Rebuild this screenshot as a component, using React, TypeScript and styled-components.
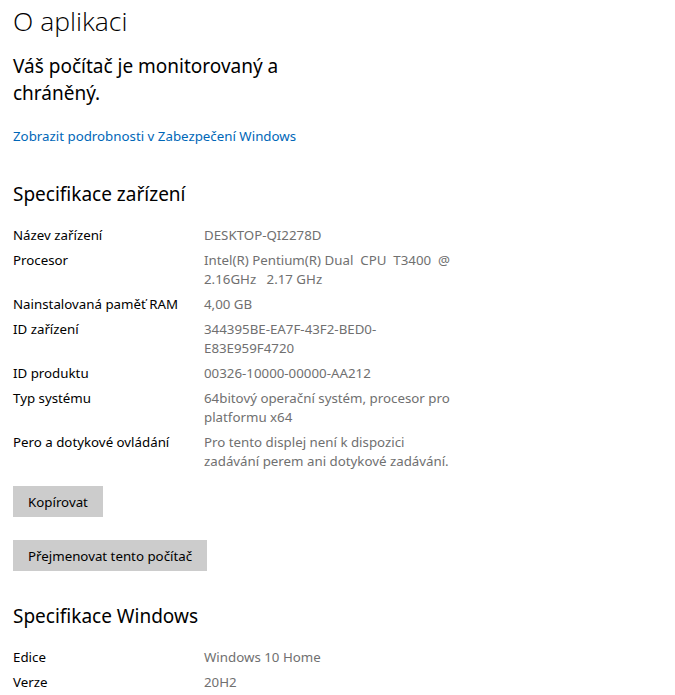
import styled, { createGlobalStyle } from 'styled-components';

type SpecRow = {
    label: string;
    lines: string[];
};

const deviceSpecs: SpecRow[] = [
    { label: 'Název zařízení', lines: ['DESKTOP-QI2278D'] },
    {
        label: 'Procesor',
        lines: ['Intel(R) Pentium(R) Dual  CPU  T3400  @', '2.16GHz   2.17 GHz'],
    },
    { label: 'Nainstalovaná paměť RAM', lines: ['4,00 GB'] },
    { label: 'ID zařízení', lines: ['344395BE-EA7F-43F2-BED0-', 'E83E959F4720'] },
    { label: 'ID produktu', lines: ['00326-10000-00000-AA212'] },
    {
        label: 'Typ systému',
        lines: ['64bitový operační systém, procesor pro', 'platformu x64'],
    },
    {
        label: 'Pero a dotykové ovládání',
        lines: [
            'Pro tento displej není k dispozici',
            'zadávání perem ani dotykové zadávání.',
        ],
    },
];

const windowsSpecs: SpecRow[] = [
    { label: 'Edice', lines: ['Windows 10 Home'] },
    { label: 'Verze', lines: ['20H2'] },
];

const SpecTable = ({ rows }: { rows: SpecRow[] }) => (
    <Table>
        {rows.map((row) => (
            <Row key={row.label}>
                <Label>{row.label}</Label>
                <Value>
                    {row.lines.map((line, index) => (
                        <ValueLine key={index}>{line}</ValueLine>
                    ))}
                </Value>
            </Row>
        ))}
    </Table>
);

const App = () => {
    return (
        <>
            <GlobalStyle />
            <Page>
                <PageTitle>O aplikaci</PageTitle>
                <Status>Váš počítač je monitorovaný a chráněný.</Status>
                <Link href="#">Zobrazit podrobnosti v Zabezpečení Windows</Link>

                <SectionTitle $top={35}>Specifikace zařízení</SectionTitle>
                <SpecTable rows={deviceSpecs} />

                <Actions>
                    <Button type="button">Kopírovat</Button>
                    <Button type="button">Přejmenovat tento počítač</Button>
                </Actions>

                <SectionTitle $top={32}>Specifikace Windows</SectionTitle>
                <SpecTable rows={windowsSpecs} />
            </Page>
        </>
    );
};

const GlobalStyle = createGlobalStyle`
    * {
        box-sizing: border-box;
    }

    body {
        margin: 0;
        background: #ffffff;
        font-family: 'Noto Sans', 'Open Sans', sans-serif;
        color: #000000;
    }
`;

const Page = styled.main`
    display: flex;
    flex-direction: column;
    align-items: flex-start;
    padding: 3px 0 20px 13px;
`;

const PageTitle = styled.h1`
    margin: 0;
    font-family: 'Open Sans', 'Noto Sans', sans-serif;
    font-weight: 300;
    font-size: 26.5px;
    line-height: 36px;
    color: #000;
`;

const Status = styled.p`
    margin: 14px 0 0;
    width: 300px;
    font-size: 19px;
    line-height: 27px;
    font-weight: 400;
    color: #000;
`;

const Link = styled.a`
    margin-top: 20px;
    font-size: 13.3px;
    line-height: 19px;
    color: #0067b8;
    text-decoration: none;
`;

const SectionTitle = styled.h2<{ $top: number }>`
    margin: ${({ $top }) => $top}px 0 0;
    font-size: 19px;
    line-height: 27px;
    font-weight: 400;
    color: #000;
`;

const Table = styled.div`
    margin-top: 18px;
    display: flex;
    flex-direction: column;
    gap: 6px;
`;

const Row = styled.div`
    display: grid;
    grid-template-columns: 191px 260px;
    font-size: 13.3px;
    line-height: 19px;
`;

const Label = styled.span`
    color: #000;
`;

const Value = styled.span`
    display: flex;
    flex-direction: column;
    color: #707070;
`;

const ValueLine = styled.span`
    white-space: pre;
`;

const Actions = styled.div`
    margin-top: 15px;
    display: flex;
    flex-direction: column;
    align-items: flex-start;
    gap: 23px;
`;

const Button = styled.button`
    height: 31px;
    padding: 0 15px;
    border: none;
    border-radius: 0;
    background: #cccccc;
    font-family: 'Noto Sans', 'Open Sans', sans-serif;
    font-size: 13.3px;
    color: #000;
    cursor: pointer;
`;

export default App;
